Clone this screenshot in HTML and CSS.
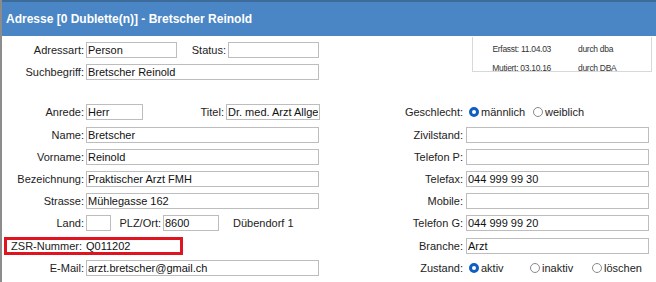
FILE: index.html
```html
<!DOCTYPE html>
<html lang="de">
<head>
  <meta charset="UTF-8">
  <title>Adresse</title>
  <link rel="stylesheet" href="styles.css">
</head>
<body>
  <div class="window">
    <div class="titlebar">Adresse [0 Dublette(n)] - Bretscher Reinold</div>

    <div class="form">
      <!-- Kopf -->
      <div class="top">
        <div class="top-left">
          <div class="row">
            <label class="lbl">Adressart:</label>
            <input class="field w-art" type="text" value="Person">
            <label class="lbl w-status">Status:</label>
            <input class="field w-status-in" type="text" value="">
          </div>
          <div class="row">
            <label class="lbl">Suchbegriff:</label>
            <input class="field w-full" type="text" value="Bretscher Reinold">
          </div>
        </div>
        <div class="info-box">
          <div class="info-row"><span class="info-date">Erfasst: 11.04.03</span><span class="info-by">durch dba</span></div>
          <div class="info-row"><span class="info-date">Mutiert: 03.10.16</span><span class="info-by">durch DBA</span></div>
        </div>
      </div>

      <!-- Hauptteil -->
      <div class="main">
        <div class="row">
          <div class="left">
            <label class="lbl">Anrede:</label>
            <input class="field w-anrede" type="text" value="Herr">
            <label class="lbl w-titel">Titel:</label>
            <input class="field w-titel-in" type="text" value="Dr. med. Arzt Allgemeinmedizin">
          </div>
          <div class="right">
            <label class="lbl-r">Geschlecht:</label>
            <span class="radio on"></span><span class="radio-text w-maennlich">männlich</span>
            <span class="radio"></span><span class="radio-text">weiblich</span>
          </div>
        </div>
        <div class="row">
          <div class="left">
            <label class="lbl">Name:</label>
            <input class="field w-full" type="text" value="Bretscher">
          </div>
          <div class="right">
            <label class="lbl-r">Zivilstand:</label>
            <input class="field w-right" type="text" value="">
          </div>
        </div>
        <div class="row">
          <div class="left">
            <label class="lbl">Vorname:</label>
            <input class="field w-full" type="text" value="Reinold">
          </div>
          <div class="right">
            <label class="lbl-r">Telefon P:</label>
            <input class="field w-right" type="text" value="">
          </div>
        </div>
        <div class="row">
          <div class="left">
            <label class="lbl">Bezeichnung:</label>
            <input class="field w-full" type="text" value="Praktischer Arzt FMH">
          </div>
          <div class="right">
            <label class="lbl-r">Telefax:</label>
            <input class="field w-right" type="text" value="044 999 99 30">
          </div>
        </div>
        <div class="row">
          <div class="left">
            <label class="lbl">Strasse:</label>
            <input class="field w-full" type="text" value="Mühlegasse 162">
          </div>
          <div class="right">
            <label class="lbl-r">Mobile:</label>
            <input class="field w-right" type="text" value="">
          </div>
        </div>
        <div class="row">
          <div class="left">
            <label class="lbl">Land:</label>
            <input class="field w-land" type="text" value="">
            <label class="lbl w-plz">PLZ/Ort:</label>
            <input class="field w-plz-in" type="text" value="8600">
            <span class="ort">Dübendorf 1</span>
          </div>
          <div class="right">
            <label class="lbl-r">Telefon G:</label>
            <input class="field w-right" type="text" value="044 999 99 20">
          </div>
        </div>
        <div class="row">
          <div class="left">
            <div class="highlight">
              <label class="lbl lbl-hl">ZSR-Nummer:</label>
              <input class="field plain" type="text" value="Q011202">
            </div>
          </div>
          <div class="right">
            <label class="lbl-r">Branche:</label>
            <input class="field w-right" type="text" value="Arzt">
          </div>
        </div>
        <div class="row">
          <div class="left">
            <label class="lbl">E-Mail:</label>
            <input class="field w-full" type="text" value="arzt.bretscher@gmail.ch">
          </div>
          <div class="right">
            <label class="lbl-r">Zustand:</label>
            <span class="radio on"></span><span class="radio-text w-aktiv">aktiv</span>
            <span class="radio"></span><span class="radio-text w-inaktiv">inaktiv</span>
            <span class="radio"></span><span class="radio-text">löschen</span>
          </div>
        </div>
      </div>
    </div>
  </div>
</body>
</html>
```

FILE: styles.css
```css
* {
  margin: 0;
  padding: 0;
  box-sizing: border-box;
}

body {
  font-family: "Liberation Sans", Arial, sans-serif;
  font-size: 11px;
  color: #222;
  background: #fff;
  width: 656px;
  height: 282px;
  overflow: hidden;
}

.window {
  height: 282px;
  border-left: 2px solid #8c8c8c;
}

/* Titelleiste */
.titlebar {
  display: flex;
  align-items: center;
  height: 36px;
  background: #4a86c6;
  border-top: 2px solid #3d6b9a;
  color: #fff;
  font-weight: bold;
  font-size: 12px;
  padding-left: 4px;
}

.form {
  padding-top: 3px;
}

.top {
  display: flex;
  height: 62.4px;
}

.top-left {
  width: 470px;
}

.row {
  display: flex;
  align-items: center;
  height: 22.2px;
}

.left {
  display: flex;
  align-items: center;
  width: 328px;
}

.right {
  display: flex;
  align-items: center;
}

.lbl {
  width: 82px;
  text-align: right;
  white-space: nowrap;
}

.lbl-r {
  width: 133px;
  text-align: right;
  white-space: nowrap;
}

.field {
  height: 16px;
  margin-left: 2px;
  border: 1px solid #bdbdbd;
  padding: 0 1px;
  font-family: "Liberation Sans", Arial, sans-serif;
  font-size: 11px;
  color: #111;
  background: #fff;
  outline: none;
}

.w-art { width: 91px; }
.w-status { width: 49px; }
.w-status-in { width: 91px; }
.w-full { width: 233px; }
.w-anrede { width: 57px; }
.w-titel { width: 81px; }
.w-titel-in { width: 94px; }
.w-land { width: 25px; }
.w-plz { width: 50px; }
.w-plz-in { width: 56px; }
.w-right { width: 183px; margin-left: 3px; }

.ort {
  margin-left: 14px;
}

/* roter Rahmen */
.highlight {
  display: flex;
  align-items: center;
  align-self: flex-start;
  flex: none;
  width: 179px;
  height: 18px;
  margin: 1px 0 0 2px;
  border: 3px solid #e0141e;
}

.lbl-hl {
  width: 75px;
  line-height: 12px;
}

.field.plain {
  flex: 1;
  min-width: 0;
  height: 12px;
  line-height: 12px;
  border: none;
  padding: 0 0 0 2px;
  background: transparent;
}

/* Info-Kasten */
.info-box {
  width: 180px;
  height: 35px;
  margin-top: -2px;
  border: 1px solid #d8d8d8;
  border-top: none;
  font-size: 8.5px;
  letter-spacing: -0.3px;
  color: #333;
  padding-top: 2px;
}

.info-row {
  display: flex;
  align-items: center;
  height: 19.5px;
}

.info-date {
  width: 78px;
  text-align: right;
}

.info-by {
  margin-left: 27px;
}

/* Radio */
.radio {
  flex: none;
  width: 10px;
  height: 10px;
  border-radius: 50%;
  border: 1px solid #8a8a8a;
  background: #fff;
}

.lbl-r + .radio {
  margin-left: 6px;
}

.radio.on {
  border: 3px solid #0f5fc3;
}

.radio-text {
  margin-left: 2px;
}

.w-maennlich { width: 52px; }
.w-aktiv { width: 49px; }
.w-inaktiv { width: 50px; }
```
